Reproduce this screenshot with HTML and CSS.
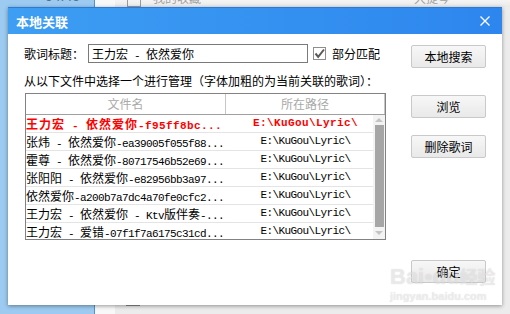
FILE: index.html
```html
<!DOCTYPE html>
<html lang="zh-CN">
<head>
    <meta charset="UTF-8">
    <title>本地关联</title>
    <link rel="stylesheet" href="styles.css">
</head>
<body>
    <div class="desktop">
        <div class="side-blue"><span class="clock">04:45</span></div>
        <div class="side-strip"></div>
        <div class="main-grey">
            <div class="top-row">
                <span class="top-box"></span>
                <span class="top-text">我的收藏</span>
                <span class="top-text top-right">大提琴</span>
            </div>
            <div class="bottom-bar"></div>
        </div>
    </div>

    <div class="dialog">
        <div class="titlebar">
            <span class="title">本地关联</span>
            <svg class="close" width="10" height="10" viewBox="0 0 10 10">
                <path d="M0.5 0.5 L9.5 9.5 M9.5 0.5 L0.5 9.5" stroke="#fff" stroke-width="1.3" fill="none"/>
            </svg>
        </div>

        <div class="dialog-body">
            <div class="left-col">
                <div class="search-row">
                    <span class="field-label">歌词标题：</span>
                    <div class="text-input"><span class="cn">王力宏</span> - <span class="cn">依然爱你</span></div>
                    <span class="check">
                        <svg width="11" height="11" viewBox="0 0 11 11">
                            <path d="M1.5 5.5 L4.2 8.8 L10 1.5" stroke="#5a5a5a" stroke-width="2" fill="none"/>
                        </svg>
                    </span>
                    <span class="check-label">部分匹配</span>
                </div>

                <p class="hint">从以下文件中选择一个进行管理（字体加粗的为当前关联的歌词）：</p>

                <div class="list">
                    <div class="list-head">
                        <div class="head-name">文件名</div>
                        <div class="head-path">所在路径</div>
                    </div>
                    <div class="list-body">
                        <div class="rows">
                            <div class="row current">
                                <div class="cell-name"><span class="cn">王力宏</span> - <span class="cn">依然爱你</span>-f95ff8bc...</div>
                                <div class="cell-path">E:\KuGou\Lyric\</div>
                            </div>
                            <div class="row">
                                <div class="cell-name"><span class="cn">张炜</span> - <span class="cn">依然爱你</span>-ea39005f055f88...</div>
                                <div class="cell-path">E:\KuGou\Lyric\</div>
                            </div>
                            <div class="row">
                                <div class="cell-name"><span class="cn">霍尊</span> - <span class="cn">依然爱你</span>-80717546b52e69...</div>
                                <div class="cell-path">E:\KuGou\Lyric\</div>
                            </div>
                            <div class="row">
                                <div class="cell-name"><span class="cn">张阳阳</span> - <span class="cn">依然爱你</span>-e82956bb3a97...</div>
                                <div class="cell-path">E:\KuGou\Lyric\</div>
                            </div>
                            <div class="row">
                                <div class="cell-name"><span class="cn">依然爱你</span>-a200b7a7dc4a70fe0cfc2...</div>
                                <div class="cell-path">E:\KuGou\Lyric\</div>
                            </div>
                            <div class="row">
                                <div class="cell-name"><span class="cn">王力宏</span> - <span class="cn">依然爱你</span> - Ktv<span class="cn">版伴奏</span>-...</div>
                                <div class="cell-path">E:\KuGou\Lyric\</div>
                            </div>
                            <div class="row">
                                <div class="cell-name"><span class="cn">王力宏</span> - <span class="cn">爱错</span>-07f1f7a6175c31cd...</div>
                                <div class="cell-path">E:\KuGou\Lyric\</div>
                            </div>
                        </div>
                        <div class="scrollbar">
                            <span class="arrow-up"></span>
                            <span class="thumb"></span>
                            <span class="arrow-down"></span>
                        </div>
                    </div>
                </div>
            </div>

            <div class="right-col">
                <button class="btn btn-search">本地搜索</button>
                <button class="btn btn-browse">浏览</button>
                <button class="btn btn-delete">删除歌词</button>
                <button class="btn btn-ok">确定</button>
            </div>
        </div>

        <!-- baidu jingyan watermark over the OK button -->
        <div class="watermark">
            <div class="wm-logo">Bai<span class="wm-paw">&#9679;</span>du<span class="wm-cn">经验</span></div>
            <div class="wm-url">jingyan.baidu.com</div>
        </div>
    </div>
</body>
</html>
```

FILE: styles.css
```css
body {
    margin: 0;
    width: 510px;
    height: 314px;
    overflow: hidden;
    font-family: "Noto Sans CJK SC", sans-serif;
    font-size: 12px;
    color: #000;
}
.desktop {
    display: flex;
    height: 314px;
}
.side-blue {
    width: 94px;
    background: #9ccaf0;
    border-right: 1px solid #4f93d2;
}
.clock {
    display: block;
    margin: -12px 0 0 45px;
    font-family: "Liberation Sans", sans-serif;
    font-size: 14px;
    color: #5b6f8a;
}
.side-strip {
    width: 20px;
    background: #f8f8f8;
}
.main-grey {
    flex: 1;
    display: flex;
    flex-direction: column;
    background: #ececec;
}
.top-row {
    display: flex;
    align-items: flex-start;
    height: 7px;
    overflow: hidden;
    padding-left: 12px;
    background: linear-gradient(#f4f4f4, #eaeaea);
}
.top-box {
    width: 12px;
    height: 12px;
    margin-top: -7px;
    border: 1px solid #9a9a9a;
}
.top-text {
    margin: -11px 0 0 12px;
    color: #a0a0a0;
}
.top-right {
    margin-left: auto;
    margin-right: 60px;
}
.bottom-bar {
    margin: auto 0 8px 11px;
    width: 14px;
    height: 1px;
    background: #8a8a8a;
}

.dialog {
    position: absolute;
    left: 8px;
    top: 7px;
    width: 494px;
    height: 298px;
    background: #fff;
    box-shadow: 0 1px 4px rgba(0, 0, 0, 0.4);
}
.titlebar {
    display: flex;
    align-items: center;
    height: 27px;
    padding: 0 12px 0 8px;
    background: linear-gradient(to right, #3d9ef3, #2d86ee);
    border-top: 1px solid #2a7bd8;
    box-sizing: border-box;
}
.title {
    color: #fff;
    font-weight: bold;
    font-size: 13px;
}
.close {
    margin-left: auto;
}

.dialog-body {
    display: flex;
    padding-left: 16px;
}
.left-col {
    width: 362px;
    padding-top: 10px;
}
.search-row {
    display: flex;
    align-items: center;
    height: 19px;
}
.field-label {
    width: 64px;
}
.text-input {
    width: 220px;
    height: 19px;
    box-sizing: border-box;
    border: 1px solid #7a7a7a;
    padding-left: 3px;
    font-family: "Liberation Mono", "Noto Sans CJK SC", monospace;
    font-size: 11px;
    letter-spacing: -0.6px;
    line-height: 17px;
    white-space: pre;
}
.text-input .cn {
    font-family: "Noto Sans CJK SC", sans-serif;
    font-size: 12px;
    letter-spacing: 0;
}
.check {
    display: flex;
    align-items: center;
    justify-content: center;
    width: 13px;
    height: 13px;
    box-sizing: border-box;
    margin-left: 5px;
    border: 1px solid #8e8e8e;
    background: #fff;
}
.check-label {
    margin-left: 6px;
}
.hint {
    margin: 10px 0 0;
    line-height: 16px;
    white-space: nowrap;
}

.list {
    width: 361px;
    height: 147px;
    margin: 4px 0 0 1px;
    box-sizing: border-box;
    border: 1px solid #828282;
    overflow: hidden;
}
.list-head {
    display: flex;
    height: 21px;
    box-sizing: border-box;
    border-bottom: 1px solid #a0a0a0;
    color: #a9a9a9;
    line-height: 20px;
    text-align: center;
}
.head-name {
    width: 200px;
    box-sizing: border-box;
    border-right: 1px solid #c6c6c6;
}
.head-path {
    flex: 1;
    border-right: 1px solid #c6c6c6;
}
.list-body {
    display: flex;
}
.rows {
    width: 347px;
}
.row {
    display: flex;
    height: 18px;
    box-sizing: border-box;
    border-bottom: 1px solid #e4e4e4;
    font-family: "Liberation Mono", "Noto Sans CJK SC", monospace;
    font-size: 11px;
    letter-spacing: -0.6px;
    line-height: 17px;
    white-space: pre;
}
.row .cn {
    font-family: "Noto Sans CJK SC", sans-serif;
    font-size: 12px;
    letter-spacing: 0;
}
.cell-name {
    width: 200px;
    overflow: hidden;
}
.cell-path {
    flex: 1;
    padding-left: 12px;
    text-align: center;
}
.row.current {
    color: #f00;
    font-weight: bold;
    letter-spacing: 0.4px;
}
.row.current .cn {
    letter-spacing: 1px;
}
.scrollbar {
    display: flex;
    flex-direction: column;
    align-items: center;
    width: 12px;
    height: 126px;
    background: #f3f3f3;
}
.arrow-up {
    margin-top: 3px;
    border-left: 4px solid transparent;
    border-right: 4px solid transparent;
    border-bottom: 4px solid #c4c4c4;
}
.thumb {
    width: 9px;
    height: 102px;
    margin-top: 3px;
    background: #a6a6a6;
}
.arrow-down {
    margin-top: 4px;
    border-left: 4px solid transparent;
    border-right: 4px solid transparent;
    border-top: 4px solid #c4c4c4;
}

.right-col {
    display: flex;
    flex-direction: column;
    width: 75px;
    margin-left: 25px;
}
.btn {
    width: 75px;
    height: 23px;
    padding: 0;
    border: 1px solid #c9c9c9;
    border-radius: 2px;
    background: linear-gradient(#f7f7f7, #e9e9e9);
    font-family: "Noto Sans CJK SC", sans-serif;
    font-size: 12px;
    color: #000;
}
.btn-search {
    margin-top: 11px;
}
.btn-browse {
    margin-top: 27px;
}
.btn-delete {
    margin-top: 17px;
}
.btn-ok {
    margin-top: 102px;
}

.watermark {
    position: absolute;
    left: 382px;
    top: 256px;
    color: rgba(255, 255, 255, 0.5);
    text-shadow: 0 0 1px rgba(0, 0, 0, 0.18);
    font-family: "Liberation Sans", sans-serif;
}
.wm-logo {
    font-size: 22px;
    font-weight: bold;
    line-height: 26px;
}
.wm-paw {
    font-size: 14px;
    vertical-align: top;
}
.wm-cn {
    font-family: "Noto Sans CJK SC", sans-serif;
    font-size: 18px;
}
.wm-url {
    font-size: 11px;
    font-weight: bold;
    line-height: 12px;
}
```
